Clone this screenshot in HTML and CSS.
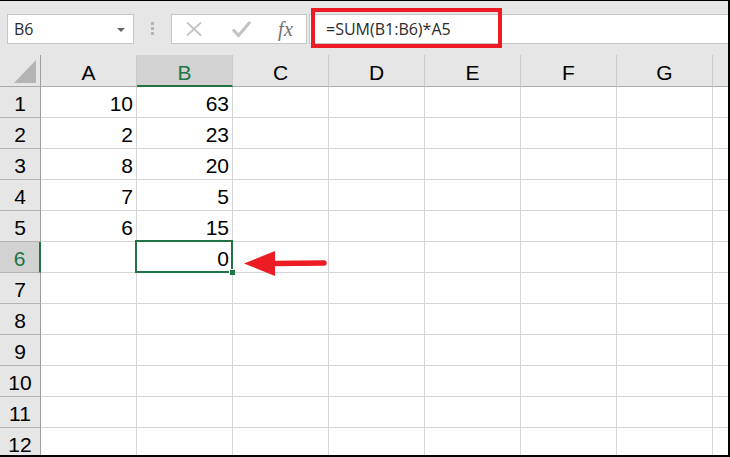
FILE: index.html
```html
<!DOCTYPE html>
<html>
<head>
<meta charset="utf-8">
<link rel="stylesheet" href="styles.css">
</head>
<body>
<div class="sheet">
  <div class="toolbar">
    <div class="namebox">
      <span class="name">B6</span>
      <span class="dropdown"></span>
    </div>
    <div class="grip"><i></i><i></i><i></i></div>
    <div class="buttons">
      <svg class="btn" width="16" height="14" viewBox="0 0 16 14"><path d="M1 0.5 L15 13.5 M15 0.5 L1 13.5" stroke="#c3c3c3" stroke-width="1.8" fill="none"/></svg>
      <svg class="btn" width="19" height="16" viewBox="0 0 19 16"><path d="M1 8.5 L6.5 14.5 L18 1" stroke="#c3c3c3" stroke-width="3" fill="none"/></svg>
      <span class="fx">fx</span>
    </div>
    <div class="formula">=SUM(B1:B6)*A5</div>
    <div class="highlight"></div>
  </div>
  <div class="grid">
    <div class="corner"><svg width="40" height="31" viewBox="0 0 40 31"><polygon points="14,28 36,5 36,28" fill="#b4b4b4"/></svg></div>
    <div class="colhead">A</div>
    <div class="colhead active">B</div>
    <div class="colhead">C</div>
    <div class="colhead">D</div>
    <div class="colhead">E</div>
    <div class="colhead">F</div>
    <div class="colhead">G</div>
    <div class="colhead"></div>

    <div class="rowhead">1</div><div class="cell">10</div><div class="cell">63</div><div class="cell"></div><div class="cell"></div><div class="cell"></div><div class="cell"></div><div class="cell"></div><div class="cell"></div>
    <div class="rowhead">2</div><div class="cell">2</div><div class="cell">23</div><div class="cell"></div><div class="cell"></div><div class="cell"></div><div class="cell"></div><div class="cell"></div><div class="cell"></div>
    <div class="rowhead">3</div><div class="cell">8</div><div class="cell">20</div><div class="cell"></div><div class="cell"></div><div class="cell"></div><div class="cell"></div><div class="cell"></div><div class="cell"></div>
    <div class="rowhead">4</div><div class="cell">7</div><div class="cell">5</div><div class="cell"></div><div class="cell"></div><div class="cell"></div><div class="cell"></div><div class="cell"></div><div class="cell"></div>
    <div class="rowhead">5</div><div class="cell">6</div><div class="cell">15</div><div class="cell"></div><div class="cell"></div><div class="cell"></div><div class="cell"></div><div class="cell"></div><div class="cell"></div>
    <div class="rowhead active">6</div><div class="cell"></div><div class="cell">0</div><div class="cell"></div><div class="cell"></div><div class="cell"></div><div class="cell"></div><div class="cell"></div><div class="cell"></div>
    <div class="rowhead">7</div><div class="cell"></div><div class="cell"></div><div class="cell"></div><div class="cell"></div><div class="cell"></div><div class="cell"></div><div class="cell"></div><div class="cell"></div>
    <div class="rowhead">8</div><div class="cell"></div><div class="cell"></div><div class="cell"></div><div class="cell"></div><div class="cell"></div><div class="cell"></div><div class="cell"></div><div class="cell"></div>
    <div class="rowhead">9</div><div class="cell"></div><div class="cell"></div><div class="cell"></div><div class="cell"></div><div class="cell"></div><div class="cell"></div><div class="cell"></div><div class="cell"></div>
    <div class="rowhead">10</div><div class="cell"></div><div class="cell"></div><div class="cell"></div><div class="cell"></div><div class="cell"></div><div class="cell"></div><div class="cell"></div><div class="cell"></div>
    <div class="rowhead">11</div><div class="cell"></div><div class="cell"></div><div class="cell"></div><div class="cell"></div><div class="cell"></div><div class="cell"></div><div class="cell"></div><div class="cell"></div>
    <div class="rowhead">12</div><div class="cell"></div><div class="cell"></div><div class="cell"></div><div class="cell"></div><div class="cell"></div><div class="cell"></div><div class="cell"></div><div class="cell"></div>

    <div class="selection"><span class="handle"></span></div>
    <svg class="arrow" width="92" height="34" viewBox="0 0 92 34">
      <polygon points="4,16.5 35,4 35,29" fill="#ed1c24"/>
      <line x1="33" y1="16.5" x2="84" y2="16" stroke="#ed1c24" stroke-width="5.5" stroke-linecap="round"/>
    </svg>
  </div>
</div>
</body>
</html>
```
FILE: styles.css
```css
html, body {
  margin: 0;
  padding: 0;
  background: #ffffff;
}

.sheet {
  position: relative;
  width: 730px;
  height: 457px;
  box-sizing: border-box;
  border-top: 1px solid #000;
  border-right: 2px solid #000;
  border-bottom: 2px solid #000;
  background: #e6e6e6;
  overflow: hidden;
}

.toolbar {
  height: 54px;
  box-sizing: border-box;
  padding-top: 13px;
  display: flex;
  align-items: flex-start;
}

.namebox {
  margin-left: 7px;
  width: 127px;
  height: 30px;
  box-sizing: border-box;
  border: 1px solid #c6c6c6;
  background: #fff;
  display: flex;
  align-items: center;
  justify-content: space-between;
  padding: 0 8px 0 6px;
}

.name {
  font-family: "Open Sans", "Noto Sans", sans-serif;
  font-size: 16px;
  color: #2b2b2b;
  line-height: 20px;
}

.dropdown {
  width: 0;
  height: 0;
  border-left: 4px solid transparent;
  border-right: 4px solid transparent;
  border-top: 4px solid #666;
  margin-top: 1px;
}

.grip {
  width: 37px;
  height: 30px;
  display: flex;
  flex-direction: column;
  align-items: center;
  padding-top: 8px;
  box-sizing: border-box;
  gap: 2px;
}

.grip i {
  display: block;
  width: 3px;
  height: 3px;
  background: #b4b4b4;
}

.buttons {
  width: 136px;
  height: 30px;
  box-sizing: border-box;
  border: 1px solid #c6c6c6;
  background: #fff;
  display: flex;
  align-items: center;
  padding-left: 14px;
}

.btn {
  display: block;
}

.buttons .btn:nth-child(2) {
  margin-left: 30px;
}

.fx {
  margin-left: 27px;
  font-family: "Liberation Serif", "DejaVu Serif", serif;
  font-style: italic;
  font-size: 20px;
  color: #707070;
  line-height: 20px;
  letter-spacing: 0.5px;
}

.formula {
  flex: 1;
  margin-left: 2px;
  height: 30px;
  box-sizing: border-box;
  border: 1px solid #c6c6c6;
  border-right: none;
  background: #fff;
  font-family: "Open Sans", "Noto Sans", sans-serif;
  font-size: 16px;
  color: #2b2b2b;
  line-height: 28px;
  padding-left: 16px;
}

.highlight {
  position: absolute;
  left: 311px;
  top: 7px;
  width: 191px;
  height: 40px;
  box-sizing: border-box;
  border: 4.5px solid #ed1c24;
}

.grid {
  position: relative;
  display: grid;
  grid-template-columns: 41px repeat(8, 96px);
  grid-template-rows: 32px;
  grid-auto-rows: 31px;
  font-family: "Liberation Sans", Arial, sans-serif;
  font-size: 21px;
  color: #000;
}

.corner {
  background: #e6e6e6;
  border-right: 1px solid #9e9e9e;
  border-bottom: 1px solid #ababab;
  box-sizing: border-box;
}

.corner svg {
  display: block;
}

.colhead {
  background: #e6e6e6;
  border-right: 1px solid #cacaca;
  border-bottom: 1px solid #ababab;
  box-sizing: border-box;
  text-align: center;
  padding-top: 4px;
  line-height: 27px;
  overflow: hidden;
}

.colhead.active {
  background: #d2d2d2;
  color: #217346;
  border-bottom: 2px solid #217346;
}

.rowhead {
  background: #e6e6e6;
  border-right: 1px solid #9e9e9e;
  border-bottom: 1px solid #b4b4b4;
  box-sizing: border-box;
  text-align: center;
  padding-top: 3px;
  line-height: 27px;
  overflow: hidden;
}

.rowhead.active {
  background: #d2d2d2;
  color: #217346;
  border-right: 2px solid #217346;
}

.cell {
  background: #fff;
  border-right: 1px solid #d4d4d4;
  border-bottom: 1px solid #d4d4d4;
  box-sizing: border-box;
  text-align: right;
  padding: 3px 3px 0 0;
  line-height: 27px;
  overflow: hidden;
}

.selection {
  position: absolute;
  left: 135px;
  top: 185px;
  width: 98px;
  height: 33px;
  box-sizing: border-box;
  border: 2px solid #217346;
}

.handle {
  position: absolute;
  right: -4px;
  bottom: -4px;
  width: 5px;
  height: 5px;
  background: #217346;
  border: 1px solid #fff;
  border-right: none;
  border-bottom: none;
}

.arrow {
  position: absolute;
  left: 240px;
  top: 192px;
}
```
